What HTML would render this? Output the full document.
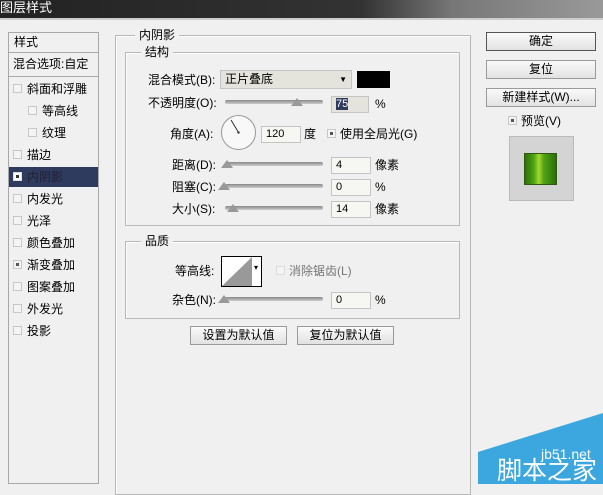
<!DOCTYPE html>
<html><head><meta charset="utf-8"><style>
*{box-sizing:border-box;margin:0;padding:0}
body{width:603px;height:484px;overflow:hidden;background:#f0f0f0;position:relative;font-family:"Liberation Sans","Noto Sans CJK SC",sans-serif;font-size:12px;color:#000}
.a{position:absolute}
.t{position:absolute;white-space:nowrap;line-height:14px}
.grp{position:absolute;border:1px solid #b8b8b8;box-shadow:1px 1px 0 #fff inset}
.lg{position:absolute;background:#f0f0f0;padding:0 4px;line-height:14px}
.cb{position:absolute;width:9px;height:9px;border:1px solid #c8c8c8;background:#f4f4f4}
.sl{position:absolute;height:4px;border-radius:2px;background:linear-gradient(#888,#ccc);}
.th{position:absolute;width:0;height:0;border-left:6px solid transparent;border-right:6px solid transparent;border-bottom:8px solid #999}
.in{position:absolute;height:17px;border:1px solid #c4c4c4;background:#f6f6f2;padding-left:4px;line-height:15px;font-size:11px}
.btn{position:absolute;border:1px solid #9a9a9a;background:linear-gradient(#fafafa,#e2e2e2);text-align:center;line-height:16px;font-size:12px}
.li{position:absolute;left:10px;width:86px;height:20px;line-height:20px;padding-left:17px}
.li .cb{left:3px;top:5px}
</style></head><body>
<div class="a" style="left:0;top:0;width:603px;height:18px;background:linear-gradient(90deg,#222 0,#333 60%,#777 75%,#999 100%)"></div>
<div class="t" style="left:0;top:1px;color:#fff;font-size:13px">图层样式</div>
<div class="a" style="left:0;top:18px;width:603px;height:2px;background:#ccc"></div>

<div class="a" style="left:8px;top:32px;width:91px;height:452px;border:1px solid #a8a8a8;background:#f0f0f0"></div>
<div class="t" style="left:14px;top:35px">样式</div>
<div class="a" style="left:9px;top:52px;width:89px;height:1px;background:#aaa"></div>
<div class="t" style="left:13px;top:57px">混合选项:自定</div>
<div class="a" style="left:9px;top:76px;width:89px;height:1px;background:#aaa"></div>
<div class="li" style="top:79px"><span class="cb"></span>斜面和浮雕</div>
<div class="li" style="top:101px;padding-left:32px"><span class="cb" style="left:18px"></span>等高线</div>
<div class="li" style="top:123px;padding-left:32px"><span class="cb" style="left:18px"></span>纹理</div>
<div class="li" style="top:145px"><span class="cb"></span>描边</div>
<div class="li" style="top:167px;left:9px;width:89px;background:#2e3a5e;color:#223;padding-left:18px"><span class="cb" style="left:4px;background:#fff;border-color:#ddd"><span class="a" style="left:2px;top:2px;width:3px;height:3px;background:#333"></span></span>内阴影</div>
<div class="li" style="top:189px"><span class="cb"></span>内发光</div>
<div class="li" style="top:211px"><span class="cb"></span>光泽</div>
<div class="li" style="top:233px"><span class="cb"></span>颜色叠加</div>
<div class="li" style="top:255px"><span class="cb"><span class="a" style="left:2px;top:2px;width:3px;height:3px;background:#555"></span></span>渐变叠加</div>
<div class="li" style="top:277px"><span class="cb"></span>图案叠加</div>
<div class="li" style="top:299px"><span class="cb"></span>外发光</div>
<div class="li" style="top:321px"><span class="cb"></span>投影</div>

<div class="grp" style="left:115px;top:35px;width:356px;height:460px"></div>
<div class="lg" style="left:135px;top:28px">内阴影</div>
<div class="grp" style="left:125px;top:52px;width:335px;height:174px"></div>
<div class="lg" style="left:141px;top:45px">结构</div>
<div class="t" style="left:148px;top:73px">混合模式(B):</div>
<div class="in" style="left:220px;top:70px;width:132px;height:19px;background:#e4e4dc;font-size:12px;line-height:17px">正片叠底<span style="position:absolute;right:4px;font-size:8px">▼</span></div>
<div class="a" style="left:357px;top:71px;width:33px;height:17px;background:#000"></div>
<div class="t" style="left:148px;top:96px">不透明度(O):</div>
<div class="sl" style="left:225px;top:100px;width:98px"></div>
<div class="th" style="left:291px;top:98px"></div>
<div class="in" style="left:331px;top:96px;width:38px;background:#e4e4dc"><span style="background:#2e3a5e;color:#fff">75</span></div>
<div class="t" style="left:375px;top:97px">%</div>
<div class="t" style="left:170px;top:127px">角度(A):</div>
<div class="a" style="left:221px;top:115px;width:35px;height:35px;border-radius:50%;border:1px solid #999;background:#f8f8f8"></div>
<svg class="a" style="left:221px;top:115px" width="35" height="35"><line x1="17.5" y1="17.5" x2="10" y2="5" stroke="#333" stroke-width="1"/><circle cx="17.5" cy="17.5" r="1.2" fill="#333"/></svg>
<div class="in" style="left:261px;top:126px;width:40px">120</div>
<div class="t" style="left:304px;top:127px">度</div>
<div class="cb" style="left:327px;top:129px"><span class="a" style="left:2px;top:2px;width:3px;height:3px;background:#555"></span></div>
<div class="t" style="left:340px;top:127px">使用全局光(G)</div>
<div class="t" style="left:172px;top:158px">距离(D):</div>
<div class="sl" style="left:225px;top:162px;width:98px"></div>
<div class="th" style="left:221px;top:160px"></div>
<div class="in" style="left:331px;top:157px;width:40px">4</div>
<div class="t" style="left:375px;top:158px">像素</div>
<div class="t" style="left:172px;top:180px">阻塞(C):</div>
<div class="sl" style="left:225px;top:184px;width:98px"></div>
<div class="th" style="left:218px;top:182px"></div>
<div class="in" style="left:331px;top:179px;width:40px">0</div>
<div class="t" style="left:375px;top:180px">%</div>
<div class="t" style="left:172px;top:202px">大小(S):</div>
<div class="sl" style="left:225px;top:206px;width:98px"></div>
<div class="th" style="left:227px;top:204px"></div>
<div class="in" style="left:331px;top:201px;width:40px">14</div>
<div class="t" style="left:375px;top:202px">像素</div>

<div class="grp" style="left:125px;top:241px;width:335px;height:78px"></div>
<div class="lg" style="left:141px;top:234px">品质</div>
<div class="t" style="left:175px;top:264px">等高线:</div>
<div class="a" style="left:221px;top:256px;width:41px;height:31px;border:1px solid #000;background:#fff"></div>
<svg class="a" style="left:222px;top:257px" width="39" height="29"><polygon points="0,29 30,0 30,29" fill="#999"/><text x="32" y="13" font-size="8">▾</text></svg>
<div class="cb" style="left:276px;top:266px;border-color:#ddd"></div>
<div class="t" style="left:289px;top:264px;color:#777">消除锯齿(L)</div>
<div class="t" style="left:172px;top:293px">杂色(N):</div>
<div class="sl" style="left:225px;top:297px;width:98px"></div>
<div class="th" style="left:218px;top:295px"></div>
<div class="in" style="left:331px;top:292px;width:40px">0</div>
<div class="t" style="left:375px;top:293px">%</div>

<div class="btn" style="left:190px;top:326px;width:97px;height:19px">设置为默认值</div>
<div class="btn" style="left:297px;top:326px;width:97px;height:19px">复位为默认值</div>

<div class="btn" style="left:486px;top:32px;width:110px;height:19px;border-color:#555">确定</div>
<div class="btn" style="left:486px;top:60px;width:110px;height:19px">复位</div>
<div class="btn" style="left:486px;top:88px;width:110px;height:19px">新建样式(W)...</div>
<div class="cb" style="left:508px;top:116px"><span class="a" style="left:2px;top:2px;width:3px;height:3px;background:#555"></span></div>
<div class="t" style="left:521px;top:114px">预览(V)</div>
<div class="a" style="left:509px;top:136px;width:65px;height:65px;border:1px solid #bbb;background:#d4d4d4"></div>
<div class="a" style="left:524px;top:153px;width:33px;height:32px;background:linear-gradient(90deg,#2a6a08,#4fa414 30%,#a4d830 45%,#4fa414 60%,#2a6a08);box-shadow:0 0 0 1px #2d5a10 inset"></div>

<svg class="a" style="left:0;top:0" width="603" height="484"><polygon points="478,452 603,413 603,484 478,484" fill="#3ca6de"/></svg>
<div class="t" style="left:541px;top:447px;color:#fff;font-size:14px">jb51.net</div>
<div class="t" style="left:497px;top:458px;color:#fff;font-size:25px;line-height:27px">脚本之家</div>
</body></html>
